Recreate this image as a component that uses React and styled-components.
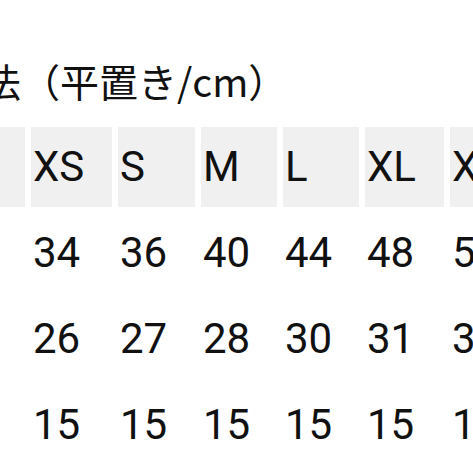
import React from "react";
import styled, { createGlobalStyle } from "styled-components";

const GlobalStyle = createGlobalStyle`
  html, body {
    margin: 0;
    padding: 0;
    background: #ffffff;
    overflow: hidden;
  }
  body {
    width: 473px;
    height: 473px;
    font-family: Roboto, "Noto Sans CJK JP", sans-serif;
    color: #111111;
  }
`;

const sizes = ["XS", "S", "M", "L", "XL", "XXL"];

const rows = [
  { label: "身幅", values: ["34", "36", "40", "44", "48", "52"] },
  { label: "着丈", values: ["26", "27", "28", "30", "31", "33"] },
  { label: "袖丈", values: ["15", "15", "15", "15", "15", "15"] }
];

// the screenshot is a crop, so the sheet starts left of the window
const Sheet = styled.div`
  margin-left: -60px;
  padding-top: 56px;
  width: 620px;
`;

const Title = styled.h2`
  margin: 0 0 23px 0;
  padding-left: 3px;
  font-family: "Noto Sans CJK JP", sans-serif;
  font-weight: 400;
  font-size: 39px;
  line-height: 48px;
  white-space: nowrap;
`;

const Table = styled.div`
  display: grid;
  grid-template-columns: 85px 81px 77px 76px 76px 79px 80px;
  grid-auto-rows: 80px;
  gap: 6px;
`;

const Cell = styled.div`
  display: flex;
  align-items: center;
  padding-left: 2px;
  font-size: 42px;
  line-height: 1;
  white-space: nowrap;
  overflow: hidden;
  background: ${(p) => (p.$head ? "#f0f0f0" : "transparent")};
`;

export default function App() {
  return (
    <>
      <GlobalStyle />
      <Sheet>
        <Title>寸法（平置き/cm）</Title>
        <Table>
          <Cell $head />
          {sizes.map((s) => (
            <Cell $head key={s}>
              {s}
            </Cell>
          ))}
          {rows.map((r) => (
            <React.Fragment key={r.label}>
              <Cell />
              {r.values.map((v, i) => (
                <Cell key={i}>{v}</Cell>
              ))}
            </React.Fragment>
          ))}
        </Table>
      </Sheet>
    </>
  );
}
